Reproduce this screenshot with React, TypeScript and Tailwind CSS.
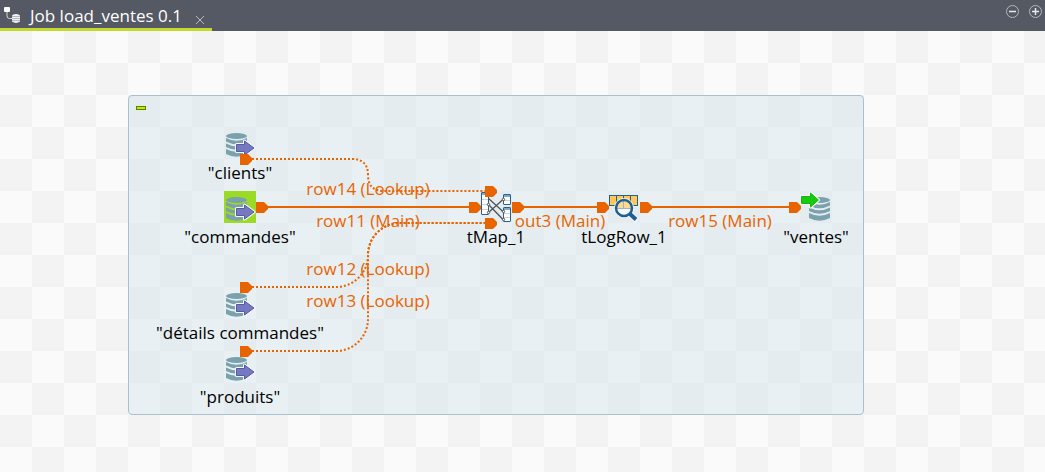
import React from "react";

function TabIcon() {
  return (
    <svg width="16" height="17" viewBox="0 0 16 17" fill="none" aria-hidden="true">
      <rect x="0" y="0" width="6" height="5" rx="1" fill="#fff" />
      <path d="M3 5v4q0 2.500 2.500 2.500H8" stroke="#d5d8dc" />
      <path d="M8 8.500q4-2.800 8 0v6q-4 2.800-8 0z" fill="#f2f2f2" />
      <path d="M8 9.500h8M8 11.500h8M8 13.500h8" stroke="#8d9098" strokeWidth=".6" />
    </svg>
  );
}

function Cylinder() {
  return (
    <g fill="#7ba1ac">
      <ellipse cx="10.500" cy="4" rx="10.500" ry="3" />
      <path d="M0 6q10.500 5.500 21 0v3.500q-10.500 5.500-21 0z" />
      <path d="M0 11.500q10.500 5.500 21 0V15q-10.500 5.500-21 0z" />
      <path d="M0 17q10.500 5.500 21 0v5q-10.500 5.500-21 0z" />
    </g>
  );
}

function DbInput() {
  return (
    <svg width="32" height="32" viewBox="0 0 32 32" aria-hidden="true">
      <g transform="translate(2 5)">
        <Cylinder />
      </g>
      <path
        d="M12.500 17.500h8v-3.500l9.500 7-9.500 7v-3.500h-8z"
        fill="#7479c2"
        stroke="#f3f5fa"
        strokeWidth="3"
        strokeLinejoin="round"
      />
      <path d="M12.500 17.500h8v-3.500l9.500 7-9.500 7v-3.500h-8z" fill="#7479c2" stroke="#575a9c" />
    </svg>
  );
}

function DbOutput() {
  return (
    <svg width="32" height="32" viewBox="0 0 32 32" aria-hidden="true">
      <g transform="translate(9 5)">
        <Cylinder />
      </g>
      <path
        d="M1.500 5.500h9v-3.500l8 7-8 7v-3.500h-9z"
        fill="#18c418"
        stroke="#f5faf5"
        strokeWidth="3"
        strokeLinejoin="round"
      />
      <path d="M1.500 5.500h9v-3.500l8 7-8 7v-3.500h-9z" fill="#18c90e" stroke="#12b812" />
    </svg>
  );
}

function MapIcon() {
  return (
    <svg width="32" height="32" viewBox="0 0 32 32" fill="none" aria-hidden="true">
      <g fill="#fff" stroke="#2c6088">
        <rect x="1.500" y="1.500" width="7" height="22" rx=".5" />
        <rect x="23.500" y="3.500" width="7" height="10" rx=".5" />
        <rect x="23.500" y="16.500" width="7" height="14" rx=".5" />
      </g>
      <path d="M2 3h6M24 5h6M24 18h6" stroke="#7fa9cc" strokeWidth="2" />
      <path d="M2 8.500h6M2 13.500h6M2 18.500h6M24 9.500h6M24 22.500h6M24 26.500h6" stroke="#ccd4da" />
      <path d="M8.500 7.500l14.500 13M8.500 13.500L23 28.500M8.500 21.500L23 8.500" stroke="#4b4f54" strokeWidth="1.200" />
      <g fill="#fff" stroke="#4b4f54">
        <circle cx="8.500" cy="13.500" r="1.200" />
        <circle cx="8.500" cy="21.500" r="1.200" />
        <circle cx="23.500" cy="8.500" r="1.200" />
        <circle cx="23.500" cy="20.500" r="1.200" />
        <circle cx="23.500" cy="28.500" r="1.200" />
      </g>
    </svg>
  );
}

function LogRowIcon() {
  return (
    <svg width="32" height="32" viewBox="0 0 32 32" fill="none" aria-hidden="true">
      <rect x="1.500" y="4.500" width="28" height="10" fill="#fcc85a" stroke="#27618c" />
      <path d="M8.500 4v11M15.500 4v11M22.500 4v11" stroke="#27618c" />
      <circle cx="16" cy="17" r="10" fill="#f4f8fa" />
      <path d="M22 23l7 6.500" stroke="#f4f8fa" strokeWidth="6" />
      <path d="M9 17a7 8.500 0 0 1 14 0z" fill="#fbd98f" />
      <path d="M15.500 10v7M9 17.500h14" stroke="#9db4bd" />
      <circle cx="16" cy="17" r="8" stroke="#1f5f93" strokeWidth="2.500" />
      <path d="M22 23l6 5.500" stroke="#1f5f93" strokeWidth="4" />
    </svg>
  );
}

type JobNode = { label: string; place: string; icon: React.ReactNode };

const nodes: JobNode[] = [
  { label: '"clients"', place: "left-[224px] top-[96px]", icon: <DbInput /> },
  { label: '"commandes"', place: "left-[224px] top-[160px]", icon: <div className="bg-[#9bdb26]"><DbInput /></div> },
  { label: '"détails commandes"', place: "left-[224px] top-[256px]", icon: <DbInput /> },
  { label: '"produits"', place: "left-[224px] top-[320px]", icon: <DbInput /> },
  { label: "tMap_1", place: "left-[480px] top-[160px]", icon: <MapIcon /> },
  { label: "tLogRow_1", place: "left-[608px] top-[160px]", icon: <LogRowIcon /> },
  { label: '"ventes"', place: "left-[800px] top-[160px]", icon: <DbOutput /> },
];

const linkLabels = [
  { text: "row14 (Lookup)", place: "left-[368px] top-[144px]" },
  { text: "row11 (Main)", place: "left-[368px] top-[176px]" },
  { text: "row12 (Lookup)", place: "left-[368px] top-[224px]" },
  { text: "row13 (Lookup)", place: "left-[368px] top-[256px]" },
  { text: "out3 (Main)", place: "left-[560px] top-[176px]" },
  { text: "row15 (Main)", place: "left-[720px] top-[176px]" },
];

const ports = [
  [240, 128], [240, 256], [240, 320], [256, 176], [469, 176],
  [485, 160], [485, 192], [512, 176], [597, 176], [640, 176], [789, 176],
];

function Links() {
  return (
    <svg className="absolute left-0 top-0" width="864" height="384" fill="none" aria-hidden="true">
      <g stroke="#e86400" strokeWidth="2">
        <path d="M266 176H471M522 176H599M650 176H791" />
        <g strokeDasharray="2 2">
          <path d="M252 128H352Q368 128 368 144T384 160H486" />
          <path d="M252 256H336A32 32 0 0 0 368 224A32 32 0 0 1 400 192H486" />
          <path d="M252 320H336A32 32 0 0 0 368 288V224A32 32 0 0 1 400 192H486" />
        </g>
      </g>
      {ports.map(([x, y]) => (
        <path key={`${x}-${y}`} d={`M${x} ${y - 5}h8l4 4v3l-4 4h-8z`} fill="#e86400" />
      ))}
    </svg>
  );
}

export default function App() {
  return (
    <div className="flex min-h-screen flex-col font-['Open_Sans','Noto_Sans',sans-serif] text-[17px] text-black">
      <header className="flex h-[31px] items-stretch justify-between bg-[#555963]">
        <div className="flex items-end gap-[10px] border-b-[3px] border-[#c3d92b] px-1 text-white">
          <div className="pb-1">
            <TabIcon />
          </div>
          <h1 className="whitespace-nowrap leading-6">Job load_ventes 0.1</h1>
          <button type="button" aria-label="Close tab" className="flex size-4 items-center justify-center">
            <svg width="8" height="8" viewBox="0 0 8 8" stroke="#b9bbc0" aria-hidden="true">
              <path d="M0 0l8 8M8 0L0 8" />
            </svg>
          </button>
        </div>
        <div className="flex items-start gap-2 pr-[2px] pt-1">
          <button type="button" aria-label="Zoom out" className="size-[15px]">
            <svg width="15" height="15" viewBox="0 0 15 15" fill="none" aria-hidden="true">
              <circle cx="7.500" cy="7.500" r="6" stroke="#b4b6bb" />
              <path d="M4 7.500h7" stroke="#e8e9eb" strokeWidth="1.500" />
            </svg>
          </button>
          <button type="button" aria-label="Zoom in" className="size-[15px]">
            <svg width="15" height="15" viewBox="0 0 15 15" fill="none" aria-hidden="true">
              <circle cx="7.500" cy="7.500" r="6" stroke="#b4b6bb" />
              <path d="M4 7.500h7M7.500 4v7" stroke="#e8e9eb" strokeWidth="1.500" />
            </svg>
          </button>
        </div>
      </header>
      <main className="relative flex-1 overflow-hidden bg-[conic-gradient(#fafafa_25%,#f3f3f3_0_50%,#fafafa_0_75%,#f3f3f3_0)] bg-[length:64px_64px]">
        <section className="absolute left-[128px] top-[64px] h-[320px] w-[736px] rounded-[4px] border border-[#a9c1cc] bg-[#d6e6ec]/50">
          <button
            type="button"
            aria-label="Collapse subjob"
            className="absolute left-[7px] top-[10px] h-1 w-[10px] border border-[#5f7f00] bg-[#b8f000]"
          />
        </section>
        {nodes.map((n) => (
          <div key={n.label} className={`absolute flex w-8 flex-col items-center ${n.place}`}>
            {n.icon}
            <span className="whitespace-nowrap leading-7">{n.label}</span>
          </div>
        ))}
        {linkLabels.map((l) => (
          <span
            key={l.text}
            className={`absolute -translate-x-1/2 whitespace-nowrap leading-7 text-[#e86400] ${l.place}`}
          >
            {l.text}
          </span>
        ))}
        <Links />
      </main>
    </div>
  );
}
